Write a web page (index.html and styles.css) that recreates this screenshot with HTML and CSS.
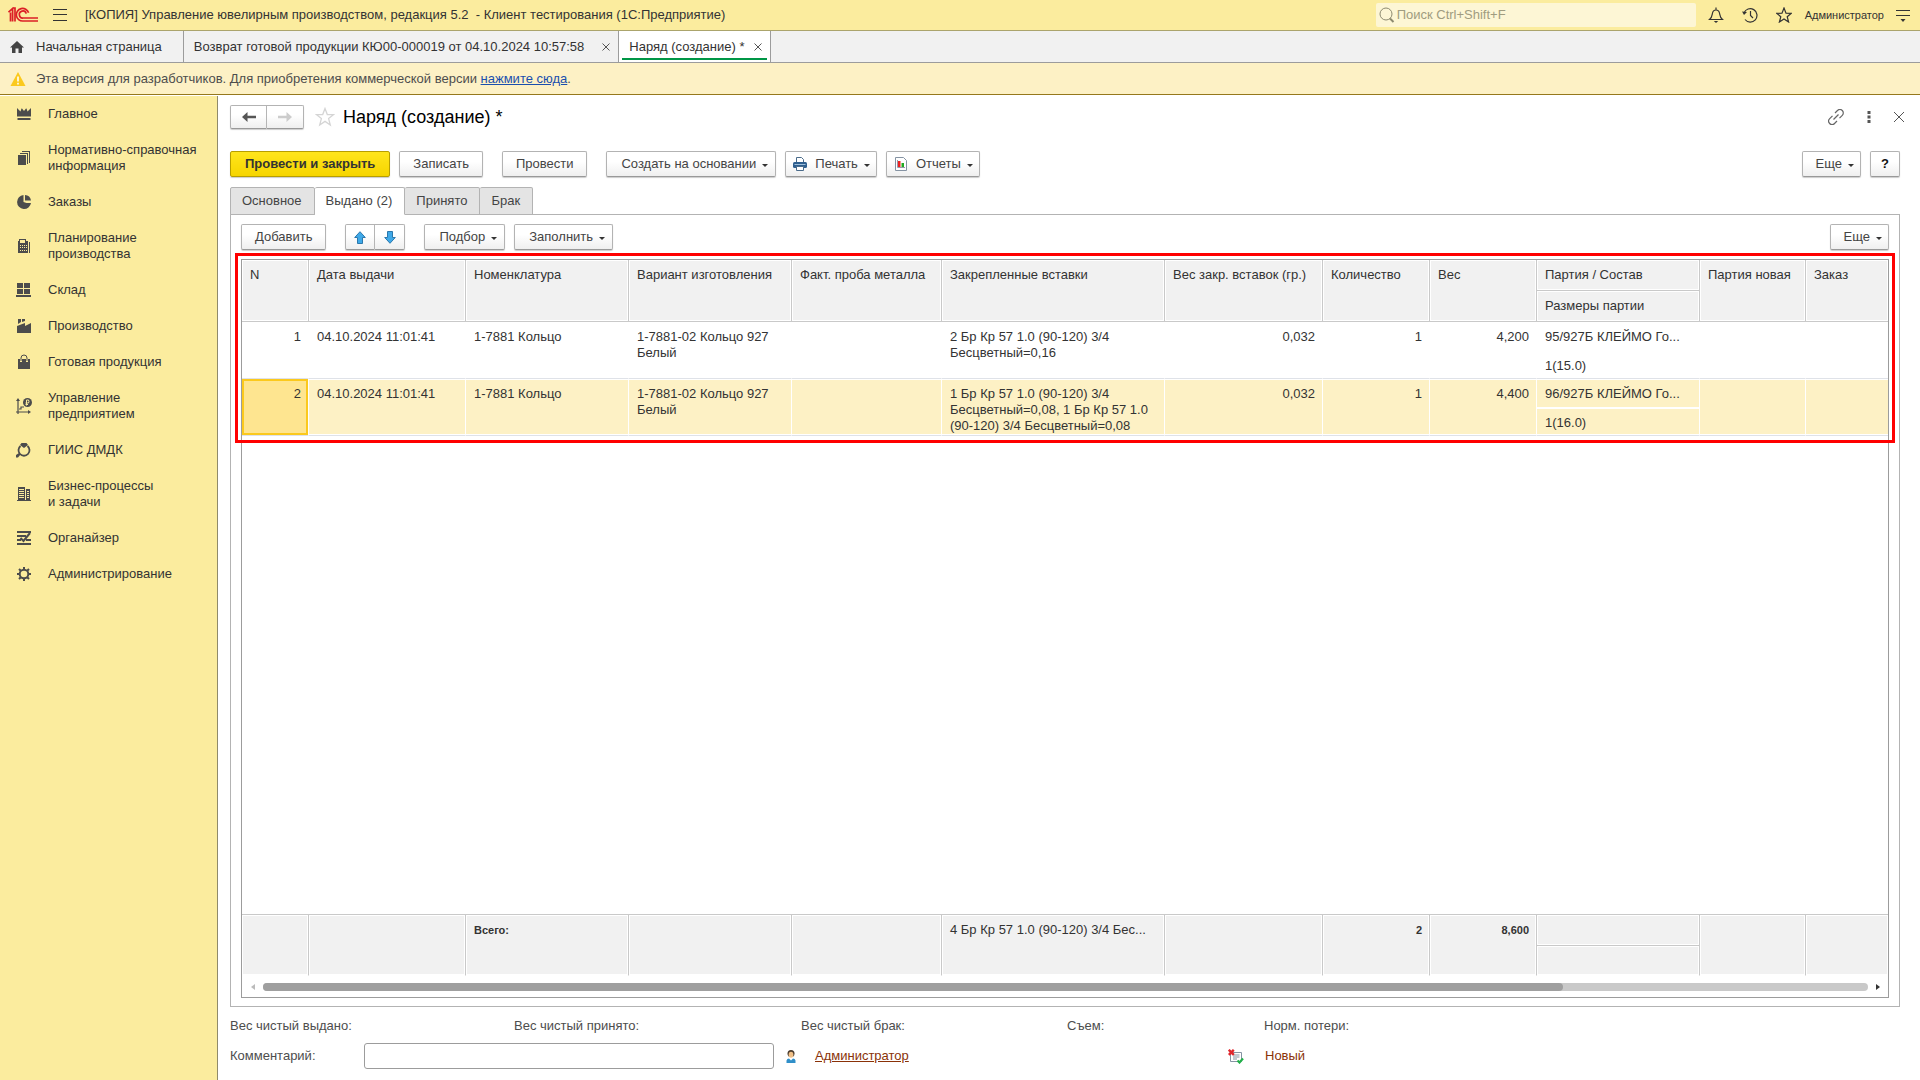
FILE: index.html
```html
<!DOCTYPE html>
<html lang="ru">
<head>
<meta charset="utf-8">
<title>Наряд (создание)</title>
<link rel="stylesheet" href="styles.css">
</head>
<body>
<header class="topbar">
  <svg class="logo" width="30" height="16" viewBox="0 0 30 16" fill="none" stroke="#dc1f26" stroke-width="1.7"><path d="M0.5 5.2 4.6 1.5V14.500M2.500 5.500V14.500M7 14.500V1H4.600" /><path d="M20.600 5.700A6.300 6.300 0 1 0 15 14H30M18.200 6.600A3.500 3.500 0 1 0 15.200 11H30"/></svg>
  <button class="icon-btn burger" aria-label="Меню"><svg width="14" height="14" viewBox="0 0 14 14" stroke="#333" fill="none"><path d="M0 1.500H14M0 6.500H14M0 12.500H14"/></svg></button>
  <span class="app-title">[КОПИЯ] Управление ювелирным производством, редакция 5.2&nbsp; - Клиент тестирования (1С:Предприятие)</span>
  <label class="search"><svg width="16" height="16" viewBox="0 0 16 16" fill="none" stroke="#8d8a70"><circle cx="7" cy="7" r="6"/><path d="M11 11.500 14.500 15" stroke-width="2"/></svg><input type="text" placeholder="Поиск Ctrl+Shift+F" aria-label="Поиск"></label>
  <nav class="top-icons">
    <button class="icon-btn" aria-label="Уведомления"><svg width="16" height="16" viewBox="0 0 16 16" fill="none" stroke="#333" stroke-width="1.200"><path d="M1.500 12.500C4 10.500 4 9 4.400 6.500 4.800 4 6.300 3 8 3s3.200 1 3.600 3.500C12 9 12 10.500 14.500 12.500ZM8 3V.5"/><path d="M5.800 14h4.400L8 16Z" fill="#333" stroke="none"/></svg></button>
    <button class="icon-btn" aria-label="История"><svg width="16" height="16" viewBox="0 0 16 16" fill="none" stroke="#333" stroke-width="1.200"><path d="M2 6A6.700 6.700 0 1 1 3 12.500M8.500 4V8.500L11 11"/><path d="M0 4.500 2 8 5 5Z" fill="#333" stroke="none"/></svg></button>
    <button class="icon-btn" aria-label="Избранное"><svg width="16" height="16" viewBox="0 0 16 16" fill="none" stroke="#333" stroke-width="1.200"><path d="M8 1 10 6.200 15.300 6.300 11.200 9.700 12.600 15 8 12 3.400 15 4.800 9.700 .7 6.300 6 6.200Z"/></svg></button>
    <a class="user" href="#">Администратор</a>
    <button class="icon-btn" aria-label="Настройки"><svg width="14" height="14" viewBox="0 0 14 14" stroke="#333" fill="none"><path d="M0 2.500H14M0 7.500H14"/><path d="M4.500 11h5L7 14Z" fill="#333" stroke="none"/></svg></button>
  </nav>
</header>

<nav class="window-tabs">
  <a class="wtab home" href="#"><svg width="14" height="12" viewBox="0 0 14 12" fill="#444"><path d="M7 0 14 6.500H12V12H8.500V7.500H5.500V12H2V6.500H0Z"/></svg>Начальная страница</a>
  <div class="wtab doc"><a href="#">Возврат готовой продукции КЮ00-000019 от 04.10.2024 10:57:58</a><button class="icon-btn" aria-label="Закрыть"><svg width="8" height="8" viewBox="0 0 8 8" stroke="#555"><path d="M.5.5 7.500 7.500M7.500.5.5 7.500"/></svg></button></div>
  <div class="wtab active"><a href="#">Наряд (создание) *</a><button class="icon-btn" aria-label="Закрыть"><svg width="8" height="8" viewBox="0 0 8 8" stroke="#555"><path d="M.5.5 7.500 7.500M7.500.5.5 7.500"/></svg></button></div>
</nav>

<div class="notice">
  <svg width="16" height="14" viewBox="0 0 16 14"><path d="M8 0 15.500 14H.5Z" fill="#fbc91d"/><path d="M8 4.500V9.500M8 10.800V12.500" stroke="#fff" stroke-width="1.600"/></svg>
  <span>Эта версия для разработчиков. Для приобретения коммерческой версии <a href="#">нажмите сюда</a>.</span>
</div>

<div class="body">
<nav class="sidebar">
  <a href="#"><svg viewBox="0 0 16 16"><path d="M1 2 4.500 5.500 5.500 2.500H6L8 5 10 2.500H10.500L11.500 5.500 15 2V10.500H1ZM1.500 12H14.500V14H1.500Z"/></svg>Главное</a>
  <a href="#"><svg viewBox="0 0 16 16"><path d="M2 5H10V15H2ZM4 3H12V14H11V4H4ZM6 1H14V13H13V2H6Z"/></svg>Нормативно-справочная<br>информация</a>
  <a href="#"><svg viewBox="0 0 16 16"><path d="M7.500 1A7 7 0 1 0 15 9L10.500 9 7.500 8ZM9 1A6.500 6.500 0 0 1 15 6.500L9 6.500Z"/></svg>Заказы</a>
  <a href="#"><svg viewBox="0 0 16 16"><path fill-rule="evenodd" d="M3 1H10V3H12V15H2V3H3ZM4 2V5H9V2ZM4 7V8H5V7ZM6 7V8H7V7ZM8 7V8H9V7ZM10 7V8H11V7ZM4 9V10H5V9ZM6 9V10H7V9ZM8 9V10H9V9ZM10 9V10H11V9ZM4 12V13H5V12ZM6 12V13H7V12ZM8 12V13H9V12ZM10 12V13H11V12ZM13 4H14V15H13Z"/></svg>Планирование<br>производства</a>
  <a href="#"><svg viewBox="0 0 16 16"><path d="M1 1H7V6H1ZM8 1H14V6H8ZM1 7H7V12H1ZM8 7H14V12H8ZM0 13H15V15H0Z"/></svg>Склад</a>
  <a href="#"><svg viewBox="0 0 16 16"><path d="M1 15V8L9 5V8L15 5V15ZM2 1H5V4L2 6ZM6 1H9V3L6 4Z"/></svg>Производство</a>
  <a href="#"><svg viewBox="0 0 16 16"><path d="M2 5H14V15H2Z"/><path d="M5 8V4A3 3 0 0 1 11 4V8" fill="none" stroke="#fbec9e" stroke-width="2"/><path d="M5 7V4A3 3 0 0 1 11 4V7" fill="none" stroke="#4c4c4c"/></svg>Готовая продукция</a>
  <a href="#"><svg viewBox="0 0 16 16"><path d="M2 0 4 3H0ZM12 12 15 14 12 16Z"/><path d="M2 2V14H13M2 14V16M0 14H2M3 11H5V9H8" fill="none" stroke="#4c4c4c" stroke-width="1.200"/><circle cx="11.500" cy="4.500" r="4.500"/><path d="M10.500 7.500V2H12.500Q13.500 3.500 12.500 5H9.500M9.500 6.500H12" fill="none" stroke="#fbec9e"/></svg>Управление<br>предприятием</a>
  <a href="#"><svg viewBox="0 0 16 16"><path d="M5.500 1H10.500L12 3 8 6 4 3ZM0 13 3 11 4.500 12.500 2 15.500H0Z"/><path d="M4.500 4A5.500 5.500 0 1 0 11.500 4" fill="none" stroke="#4c4c4c" stroke-width="1.800"/></svg>ГИИС ДМДК</a>
  <a href="#"><svg viewBox="0 0 16 16"><path fill-rule="evenodd" d="M2 1H9V14H10V3H14V14H15V15H1V14H2ZM3 3V4H8V3ZM3 5V6H8V5ZM3 7V8H8V7ZM3 9V10H8V9ZM3 11V12H8V11ZM11 5V6H13V5ZM11 7V8H13V7ZM11 9V10H13V9ZM11 11V12H13V11Z"/></svg>Бизнес-процессы<br>и задачи</a>
  <a href="#"><svg viewBox="0 0 16 16"><path d="M1 1H15V3H1ZM1 5H10V7H1ZM1 9H5V11H1ZM10 9H15V11H10ZM1 13H15V15H1Z"/><path d="M4.500 8 7.500 11 14 3" fill="none" stroke="#4c4c4c" stroke-width="2"/></svg>Органайзер</a>
  <a href="#"><svg viewBox="0 0 16 16" fill="none" stroke="#4c4c4c"><circle cx="8" cy="8" r="4.300" fill="none" stroke-width="2"/><path d="M8 1V3.500M8 12.500V15M1 8H3.500M12.500 8H15M3 3 4.800 4.800M11.200 11.200 13 13M3 13 4.800 11.200M11.200 4.800 13 3" stroke-width="2"/></svg>Администрирование</a>
</nav>

<main class="form">
  <div class="title-row">
    <div class="btn-pair nav-pair">
      <button class="btn" aria-label="Назад"><svg width="14" height="10" viewBox="0 0 14 10" fill="#555"><path d="M0 5 5.500 0V3.700H14V6.300H5.500V10Z"/></svg></button><button class="btn" aria-label="Вперед"><svg width="14" height="10" viewBox="0 0 14 10" fill="#ccc"><path d="M14 5 8.500 0V3.700H0V6.300H8.500V10Z"/></svg></button>
    </div>
    <button class="icon-btn" aria-label="В избранное"><svg width="20" height="20" viewBox="0 0 20 20" fill="none" stroke="#d5d5d5" stroke-width="1.300"><path d="M10 1.500 12.300 7.500 18.500 7.700 13.600 11.600 15.300 18 10 14.400 4.700 18 6.400 11.600 1.500 7.700 7.700 7.500Z"/></svg></button>
    <h1>Наряд (создание) *</h1>
    <div class="window-icons">
      <button class="icon-btn" aria-label="Ссылка"><svg width="16" height="16" viewBox="0 0 16 16" fill="none" stroke="#666" stroke-width="1.200"><path d="M7 4 9.500 1.500A3.200 3.200 0 0 1 14.300 6.300L11.500 9.200M9 12 6.500 14.500A3.200 3.200 0 0 1 1.700 9.700L4.500 6.800M5.500 10.500 10.500 5.500"/></svg></button>
      <button class="icon-btn" aria-label="Действия"><svg width="4" height="12" viewBox="0 0 4 12" fill="#555"><path d="M.5 0H3.500V3H.5ZM.5 4.500H3.500V7.500H.5ZM.5 9H3.500V12H.5Z"/></svg></button>
      <button class="icon-btn" aria-label="Закрыть"><svg width="10" height="10" viewBox="0 0 10 10" stroke="#555"><path d="M0 0 10 10M10 0 0 10"/></svg></button>
    </div>
  </div>

  <div class="commands">
    <button class="btn primary">Провести и закрыть</button>
    <button class="btn">Записать</button>
    <button class="btn apart">Провести</button>
    <button class="btn drop apart">Создать на основании</button>
    <button class="btn drop pic"><svg width="14" height="14" viewBox="0 0 14 14"><path d="M3.500 5V.5H8.500L10.500 2.500V5" fill="#fff" stroke="#4a6b8a"/><rect y="5" width="14" height="6" rx="1.500" fill="#2f5f8f"/><path d="M1.500 7.500H12.500" stroke="#9fc0dc"/><path d="M3.500 9.500H10.500V13.500H3.500Z" fill="#fff" stroke="#4a6b8a"/></svg>Печать</button>
    <button class="btn drop pic"><svg width="14" height="14" viewBox="0 0 14 14"><path d="M1.500.5H9.500L12.500 3.500V13.500H1.500Z" fill="#fff" stroke="#8593a3"/><path d="M4 4H6.500V10H4Z" fill="#e22"/><path d="M7.500 6H10V10H7.500Z" fill="#2a2"/><path d="M3.500 3V10.500H11" fill="none" stroke="#99a"/></svg>Отчеты</button>
    <button class="btn drop push">Еще</button>
    <button class="btn help" aria-label="Справка">?</button>
  </div>

  <div class="page-tabs" role="tablist">
    <button role="tab">Основное</button><button role="tab" class="current" aria-selected="true">Выдано (2)</button><button role="tab">Принято</button><button role="tab">Брак</button>
  </div>

  <section class="page">
    <div class="commands inner">
      <button class="btn">Добавить</button>
      <div class="btn-pair move-pair">
        <button class="btn" aria-label="Вверх"><svg width="12" height="13" viewBox="0 0 12 13" fill="#3fa9e8" stroke="#2b78ad"><path d="M6 .7 11.300 6.500H8.500V12.500H3.500V6.500H.7Z"/></svg></button><button class="btn" aria-label="Вниз"><svg width="12" height="13" viewBox="0 0 12 13" fill="#3fa9e8" stroke="#2b78ad"><path d="M6 12.300 11.300 6.500H8.500V.5H3.500V6.500H.7Z"/></svg></button>
      </div>
      <button class="btn drop">Подбор</button>
      <button class="btn drop">Заполнить</button>
      <button class="btn drop push">Еще</button>
    </div>

    <div class="grid">
      <div class="grid-rows">
        <table>
          <colgroup><col class="c-n"><col class="c-date"><col class="c-wide"><col class="c-wide"><col class="c-probe"><col class="c-insert"><col class="c-iw"><col class="c-qty"><col class="c-qty"><col class="c-wide"><col class="c-new"><col></colgroup>
          <thead>
            <tr><th rowspan="2">N</th><th rowspan="2">Дата выдачи</th><th rowspan="2">Номенклатура</th><th rowspan="2">Вариант изготовления</th><th rowspan="2">Факт. проба металла</th><th rowspan="2">Закрепленные вставки</th><th rowspan="2">Вес закр. вставок (гр.)</th><th rowspan="2">Количество</th><th rowspan="2">Вес</th><th>Партия / Состав</th><th rowspan="2">Партия новая</th><th rowspan="2">Заказ</th></tr>
            <tr><th>Размеры партии</th></tr>
          </thead>
          <tbody>
            <tr><td rowspan="2" class="num">1</td><td rowspan="2">04.10.2024 11:01:41</td><td rowspan="2">1-7881 Кольцо</td><td rowspan="2">1-7881-02 Кольцо 927 Белый</td><td rowspan="2"></td><td rowspan="2">2 Бр Кр 57 1.0 (90-120) 3/4 Бесцветный=0,16</td><td rowspan="2" class="num">0,032</td><td rowspan="2" class="num">1</td><td rowspan="2" class="num">4,200</td><td class="upper">95/927Б КЛЕЙМО Го...</td><td rowspan="2"></td><td rowspan="2"></td></tr>
            <tr><td>1(15.0)</td></tr>
          </tbody>
          <tbody class="selected">
            <tr><td rowspan="2" class="num cell-current">2</td><td rowspan="2">04.10.2024 11:01:41</td><td rowspan="2">1-7881 Кольцо</td><td rowspan="2">1-7881-02 Кольцо 927 Белый</td><td rowspan="2"></td><td rowspan="2">1 Бр Кр 57 1.0 (90-120) 3/4 Бесцветный=0,08, 1 Бр Кр 57 1.0 (90-120) 3/4 Бесцветный=0,08</td><td rowspan="2" class="num">0,032</td><td rowspan="2" class="num">1</td><td rowspan="2" class="num">4,400</td><td class="upper">96/927Б КЛЕЙМО Го...</td><td rowspan="2"></td><td rowspan="2"></td></tr>
            <tr><td>1(16.0)</td></tr>
          </tbody>
        </table>
        <div class="highlight"></div>
      </div>
      <table class="totals">
        <colgroup><col class="c-n"><col class="c-date"><col class="c-wide"><col class="c-wide"><col class="c-probe"><col class="c-insert"><col class="c-iw"><col class="c-qty"><col class="c-qty"><col class="c-wide"><col class="c-new"><col></colgroup>
        <tbody>
          <tr><th rowspan="2"></th><th rowspan="2"></th><th rowspan="2" class="sum">Всего:</th><th rowspan="2"></th><th rowspan="2"></th><th rowspan="2">4 Бр Кр 57 1.0 (90-120) 3/4 Бес...</th><th rowspan="2"></th><th rowspan="2" class="num sum">2</th><th rowspan="2" class="num sum">8,600</th><th></th><th rowspan="2"></th><th rowspan="2"></th></tr>
          <tr><th></th></tr>
        </tbody>
      </table>
      <div class="hscroll">
        <svg width="4" height="6" viewBox="0 0 4 6" fill="#bbb"><path d="M4 0V6L0 3Z"/></svg>
        <div class="track"><div class="thumb"></div></div>
        <svg width="4" height="6" viewBox="0 0 4 6" fill="#333"><path d="M0 0V6L4 3Z"/></svg>
      </div>
    </div>
  </section>

  <footer class="summary">
    <div class="weights"><span>Вес чистый выдано:</span><span>Вес чистый принято:</span><span>Вес чистый брак:</span><span>Съем:</span><span>Норм. потери:</span></div>
    <div class="details">
      <label for="comment">Комментарий:</label>
      <input id="comment" type="text">
      <svg width="10" height="13" viewBox="0 0 10 13"><circle cx="5" cy="3.500" r="3.500" fill="#4a3b2c"/><ellipse cx="5" cy="4.800" rx="2.400" ry="3" fill="#f0c088"/><path d="M.5 13V10.500Q1 8.500 3 8.500L5 10.500 7 8.500Q9 8.500 9.500 10.500V13Z" fill="#2f8fc9"/></svg>
      <a class="brown" href="#">Администратор</a>
      <div class="status"><svg width="16" height="15" viewBox="0 0 16 15"><path d="M2.500 3.500H13.500V12.500H2.500Z" fill="#fff" stroke="#8593a3"/><path d="M5 6H11.500M5 8H11.500M5 10H9" stroke="#8593a3"/><path d="M.8.8 5.800 5.800M5.800.8.8 5.800" stroke="#e0262d" stroke-width="2.400"/><path d="M9.500 11.500 11.500 13.500 15 9.500" fill="none" stroke="#22b04a" stroke-width="2.200"/></svg><span class="brown">Новый</span></div>
    </div>
  </footer>
</main>
</div>
</body>
</html>
```
FILE: styles.css
```css
* { box-sizing: border-box; }
body {
  margin: 0;
  min-height: 100vh;
  display: flex;
  flex-direction: column;
  font: 13px/16px "Liberation Sans", Arial, sans-serif;
  color: #333;
  background: #fff;
}
button, input { font: inherit; color: inherit; }
a { color: inherit; text-decoration: none; }
svg { flex: none; display: block; }
.icon-btn { border: 0; padding: 0; background: none; display: flex; align-items: center; justify-content: center; }

/* top bar */
.topbar { display: flex; align-items: center; height: 31px; padding: 0 10px 0 8px; background: #fbec9e; border-bottom: 1px solid #aba46c; }
.burger { margin: 0 18px 0 15px; }
.app-title { flex: 1; white-space: nowrap; }
.search { display: flex; align-items: center; gap: 2px; width: 320px; height: 24px; padding-left: 3px; border-radius: 2px; background: #fdf6d5; margin-right: 12px; }
.search input { flex: 1; min-width: 0; border: 0; background: none; padding: 0; outline: 0; }
.search input::placeholder { color: #a09c80; opacity: 1; }
.top-icons { display: flex; align-items: center; gap: 18px; }
.user { font-size: 11px; margin-left: -5px; margin-right: -6px; }

/* open windows */
.window-tabs { display: flex; height: 32px; background: #f1f1f1; border-bottom: 1px solid #9c9c9c; }
.wtab { display: flex; align-items: center; gap: 10px; padding: 0 8px 0 10px; border-right: 1px solid #9c9c9c; white-space: nowrap; }
.wtab.home { gap: 12px; padding: 0 21px 0 10px; }
.wtab.doc { gap: 18px; }
.wtab.active { background: #fff; box-shadow: inset 0 -2px #fff, inset 3px 0 #fff, inset -3px 0 #fff, inset 0 -4px #009646; }

.notice { display: flex; align-items: center; gap: 10px; height: 32px; padding-left: 10px; background: #fdf1c5; border-bottom: 1px solid #95781c; color: #4d4d4d; }
.notice a { color: #1a4fae; text-decoration: underline; }

.body { flex: 1; display: flex; padding-top: 1px; }

/* sections */
.sidebar { width: 218px; background: #fbec9e; border-right: 1px solid #8f8a6a; }
.sidebar a { display: block; position: relative; padding: 10px 0 10px 48px; }
.sidebar svg { position: absolute; left: 16px; top: calc(50% - 8px); width: 16px; height: 16px; fill: #4c4c4c; }

/* form */
.form { flex: 1; min-width: 0; display: flex; flex-direction: column; padding: 9px 20px 11px 12px; }
.title-row { display: flex; align-items: center; height: 24px; gap: 11px; }
h1 { margin: 0 0 0 -3px; font-size: 18px; line-height: 22px; font-weight: 400; color: #000; }
.window-icons { margin: 0 -4px 0 auto; display: flex; align-items: center; gap: 23px; }

.btn {
  display: flex; align-items: center; justify-content: center;
  height: 26px; padding: 0 13px;
  border: 1px solid #b3b3b3; border-bottom-color: #999; border-radius: 2px;
  background: linear-gradient(#fff 40%, #efefef);
  box-shadow: 0 1px 1px #ccc;
  color: #444; white-space: nowrap;
}
.btn.primary { padding: 0 14px; background: linear-gradient(#ffe51c, #f6d500); border-color: #b79e00; font-weight: 700; color: #333; }
.btn.drop { padding: 0 7px 0 14px; }
.btn.drop::after { content: ""; border: 3px solid transparent; border-top-color: #333; border-bottom: 0; margin: 3px 0 0 6px; }
.btn.pic { gap: 8px; padding: 0 6px 0 7px; }
.btn.pic::after { margin-left: -2px; }
.btn.push { padding: 0 6px 0 13px; }
.btn.help { width: 30px; padding: 0; font-weight: 700; color: #111; }
.btn-pair { display: flex; }
.btn-pair .btn { padding: 0; }
.btn-pair .btn:first-child { border-radius: 2px 0 0 2px; }
.btn-pair .btn:last-child { border-left: 0; border-radius: 0 2px 2px 0; }
.nav-pair .btn { height: 24px; width: 37px; }
.move-pair { margin: 0 10px; }
.move-pair .btn { width: 30px; }

.commands { display: flex; gap: 9px; margin-top: 22px; }
.apart { margin-left: 10px; }
.push { margin-left: auto; }

.page-tabs { display: flex; margin-top: 10px; height: 28px; margin-bottom: -1px; z-index: 1; }
.page-tabs button { padding: 0 12px 0 11px; border: 1px solid #b3b3b3; border-left: 0; background: #e4e4e4; color: #444; border-radius: 2px 2px 0 0; }
.page-tabs button:first-child { border-left: 1px solid #b3b3b3; }
.page-tabs .current { background: #fff; border-bottom-color: #fff; }

.page { flex: 1; display: flex; flex-direction: column; padding: 9px 10px 8px; border: 1px solid #b3b3b3; }
.inner { margin: 0 0 9px; }

/* table */
.grid { flex: 1; display: flex; flex-direction: column; border: 1px solid #9c9c9c; }
.grid-rows { position: relative; margin-bottom: auto; }
.highlight { position: absolute; inset: -7px; border: 3px solid #f00; pointer-events: none; }
table { width: 100%; table-layout: fixed; border-collapse: separate; border-spacing: 0; }
.c-n { width: 67px; }
.c-date { width: 157px; }
.c-wide { width: 163px; }
.c-probe { width: 150px; }
.c-insert { width: 223px; }
.c-iw { width: 158px; }
.c-qty { width: 107px; }
.c-new { width: 106px; }
th, td { text-align: left; vertical-align: top; font-weight: 400; overflow: hidden; }
th { height: 31px; padding: 7px 0 7px 8px; background: #f1f1f1; border-right: 1px solid #c9c9c9; border-bottom: 1px solid #c9c9c9; box-shadow: inset 0 0 0 1px #fff; }
th:nth-child(12), td:nth-child(12) { border-right: 0; }
td { height: 28px; padding: 7px 8px 0 8px; border-bottom: 1px solid #dfe2e8; border-right: 1px solid transparent; }
td.upper { height: 29px; border-bottom: 1px solid transparent; white-space: nowrap; }
td:nth-child(4), td:nth-child(6) { padding-right: 4px; }
.num { text-align: right; padding-right: 7px; }
.selected td { background: #fdf1c5; border-right-color: #fff; box-shadow: inset 0 1px #fff, inset 0 -1px #fff; }
.selected td.upper { border-bottom-color: #fff; box-shadow: inset 0 1px #fff; }
.selected td.cell-current { background: #fee590; box-shadow: inset 0 0 0 2px #fbc91d; }
.totals th { border-bottom-color: #fff; }
.totals tr:first-child th { height: 32px; border-top: 1px solid #c9c9c9; }
.totals tr:last-child th { height: 30px; }
.totals tr:first-child th:nth-child(10) { border-bottom-color: #c9c9c9; }
.totals .sum { font-size: 11px; font-weight: 700; }

.hscroll { display: flex; align-items: center; gap: 8px; height: 21px; padding: 0 8px 0 9px; }
.track { flex: 1; height: 8px; border-radius: 4px; background: #c9c9c9; }
.thumb { width: 81%; height: 8px; border-radius: 4px; background: #9f9f9f; }

/* summary */
.summary { padding-top: 11px; color: #4d4d4d; }
.weights { display: grid; grid-template-columns: 284px 287px 266px 197px 1fr; }
.details { display: flex; align-items: center; height: 26px; margin-top: 9px; }
.details label { width: 134px; }
.details input { width: 410px; height: 26px; border: 1px solid #9c9c9c; border-radius: 3px; margin-right: 12px; }
.brown { color: #8a3208; }
a.brown { text-decoration: underline; margin-left: 19px; width: 413px; }
.status { display: flex; align-items: center; gap: 21px; }
```
